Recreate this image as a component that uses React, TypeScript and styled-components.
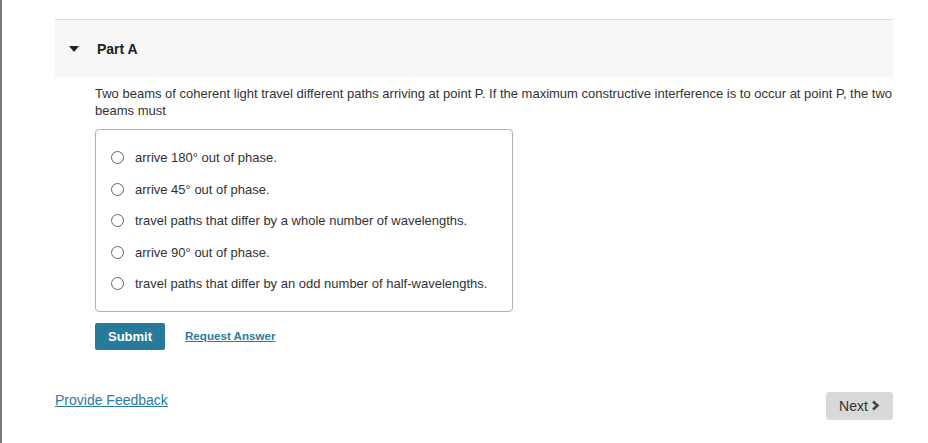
import React from 'react'
import styled, { createGlobalStyle } from 'styled-components'

const GlobalStyle = createGlobalStyle`
    html, body {
        margin: 0;
        padding: 0;
        background: #fff;
        font-family: "Liberation Sans", Arial, sans-serif;
        color: #333;
    }
`;

const Page = styled.div`
    box-sizing: border-box;
    min-height: 443px;
    border-left: 2px solid #7a7a7a;
    padding: 19px 35px 0 53px;
`;

const PartHeader = styled.div`
    display: flex;
    align-items: center;
    height: 57px;
    border-top: 1px solid #dcdcdc;
    background: #f7f7f7;
`;

const Caret = styled.span`
    width: 0;
    height: 0;
    margin-left: 14px;
    border-left: 5px solid transparent;
    border-right: 5px solid transparent;
    border-top: 6px solid #222;
`;

const PartTitle = styled.h2`
    margin: 0 0 0 18px;
    font-size: 14px;
    font-weight: bold;
    color: #222;
`;

const PartBody = styled.div`
    padding: 8px 0 0 40px;
`;

const Question = styled.p`
    margin: 0;
    font-size: 13px;
    line-height: 17px;
    color: #333;
`;

const Choices = styled.div`
    box-sizing: border-box;
    width: 418px;
    margin-top: 10px;
    padding: 12px 0 11px 15px;
    border: 1px solid #b0b0b0;
    border-radius: 4px;
`;

const Choice = styled.label`
    display: flex;
    align-items: center;
    height: 31.5px;
    font-size: 13px;
    color: #333;
`;

const Radio = styled.span`
    box-sizing: border-box;
    width: 13px;
    height: 13px;
    border: 1px solid #666;
    border-radius: 50%;
    margin-right: 11px;
    flex: none;
`;

const Actions = styled.div`
    display: flex;
    align-items: center;
    gap: 20px;
    margin-top: 11px;
`;

const SubmitButton = styled.button`
    width: 70px;
    height: 27px;
    padding: 0;
    border: none;
    border-radius: 2px;
    background: #277a9a;
    color: #fff;
    font-family: inherit;
    font-size: 13px;
    font-weight: bold;
`;

const TextLink = styled.a<{ $bold?: boolean; $size: number }>`
    color: #2a7ba2;
    text-decoration: underline;
    font-size: ${p => p.$size}px;
    font-weight: ${p => (p.$bold ? 'bold' : 'normal')};
    line-height: 16px;
    cursor: pointer;
`;

const Footer = styled.div`
    display: flex;
    justify-content: space-between;
    align-items: flex-start;
    margin-top: 42px;
`;

const NextButton = styled.button`
    display: flex;
    align-items: center;
    justify-content: center;
    gap: 3px;
    width: 67px;
    height: 28px;
    padding: 0;
    border: none;
    border-radius: 3px;
    background: #d9d9d9;
    color: #333;
    font-family: inherit;
    font-size: 14px;
`;

const choices = [
    'arrive 180° out of phase.',
    'arrive 45° out of phase.',
    'travel paths that differ by a whole number of wavelengths.',
    'arrive 90° out of phase.',
    'travel paths that differ by an odd number of half-wavelengths.',
];

export default function App() {
    return (
        <>
            <GlobalStyle />
            <Page>
                <PartHeader>
                    <Caret />
                    <PartTitle>Part A</PartTitle>
                </PartHeader>

                <PartBody>
                    <Question>
                        Two beams of coherent light travel different paths arriving at point P. If the maximum constructive interference is to occur at point P, the two beams must
                    </Question>

                    <Choices>
                        {choices.map(c => (
                            <Choice key={c}>
                                <Radio />
                                {c}
                            </Choice>
                        ))}
                    </Choices>

                    <Actions>
                        <SubmitButton>Submit</SubmitButton>
                        <TextLink $bold $size={11.6}>Request Answer</TextLink>
                    </Actions>
                </PartBody>

                <Footer>
                    <TextLink $size={14}>Provide Feedback</TextLink>
                    <NextButton>
                        Next
                        <svg width="9" height="11" viewBox="0 0 9 11">
                            <path d="M2 1.5 L6.5 5.5 L2 9.5" fill="none" stroke="#444" strokeWidth="2.6" />
                        </svg>
                    </NextButton>
                </Footer>
            </Page>
        </>
    )
}
